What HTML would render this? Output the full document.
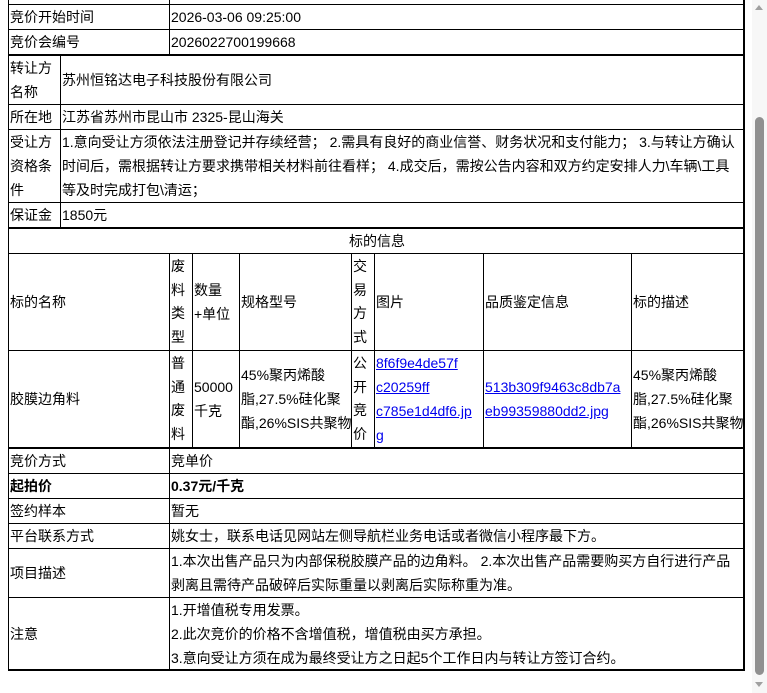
<!DOCTYPE html>
<html><head><meta charset="utf-8"><style>
*{margin:0;padding:0;box-sizing:border-box}
html,body{width:767px;height:693px;overflow:hidden;background:#fff}
body{position:relative;font:14px/24px "Liberation Sans","Noto Sans CJK SC",sans-serif;color:#000}
.c{position:absolute;border:1px solid #000;display:flex;align-items:center;padding-left:1px;overflow:hidden}
.c div{width:100%}
.h{position:absolute;background:#000}
a{color:#00e;text-decoration:underline}
.sb{position:absolute;left:752px;top:0;width:15px;height:693px;background:#f7f7f7}
.th{position:absolute;left:755px;top:117px;width:9px;height:558px;background:#909090;border-radius:5px}
</style></head><body>
<div class="c" style="left:8px;top:-21px;width:162px;height:26px"></div>
<div class="c" style="left:169px;top:-21px;width:576px;height:26px"></div>
<div class="c" style="left:8px;top:4px;width:162px;height:26px">竞价开始时间</div>
<div class="c" style="left:169px;top:4px;width:576px;height:26px">2026-03-06 09:25:00</div>
<div class="c" style="left:8px;top:29px;width:162px;height:26px">竞价会编号</div>
<div class="c" style="left:169px;top:29px;width:576px;height:26px">2026022700199668</div>
<div class="h" style="left:8px;top:54px;width:737px;height:2px"></div>
<div class="c" style="left:8px;top:55px;width:53px;height:50px"><div>转让方<br>名称</div></div>
<div class="c" style="left:60px;top:55px;width:685px;height:50px">苏州恒铭达电子科技股份有限公司</div>
<div class="c" style="left:8px;top:104px;width:53px;height:26px">所在地</div>
<div class="c" style="left:60px;top:104px;width:685px;height:26px">江苏省苏州市昆山市 2325-昆山海关</div>
<div class="c" style="left:8px;top:129px;width:53px;height:74px"><div>受让方<br>资格条<br>件</div></div>
<div class="c" style="left:60px;top:129px;width:685px;height:74px;padding-right:2px"><div>1.意向受让方须依法注册登记并存续经营； 2.需具有良好的商业信誉、财务状况和支付能力； 3.与转让方确认时间后，需根据转让方要求携带相关材料前往看样； 4.成交后，需按公告内容和双方约定安排人力\车辆\工具等及时完成打包\清运；</div></div>
<div class="c" style="left:8px;top:202px;width:53px;height:26px">保证金</div>
<div class="c" style="left:60px;top:202px;width:685px;height:26px">1850元</div>
<div class="h" style="left:8px;top:227px;width:737px;height:2px"></div>
<div class="c" style="left:8px;top:228px;width:737px;height:26px;justify-content:center">标的信息</div>
<div class="c" style="left:8px;top:253px;width:162px;height:98px">标的名称</div>
<div class="c" style="left:169px;top:253px;width:24px;height:98px;line-height:23.5px"><div>废<br>料<br>类<br>型</div></div>
<div class="c" style="left:192px;top:253px;width:48px;height:98px"><div>数量<br>+单位</div></div>
<div class="c" style="left:239px;top:253px;width:113px;height:98px">规格型号</div>
<div class="c" style="left:351px;top:253px;width:24px;height:98px;line-height:23.5px"><div>交<br>易<br>方<br>式</div></div>
<div class="c" style="left:374px;top:253px;width:110px;height:98px">图片</div>
<div class="c" style="left:483px;top:253px;width:149px;height:98px">品质鉴定信息</div>
<div class="c" style="left:631px;top:253px;width:114px;height:98px">标的描述</div>
<div class="c" style="left:8px;top:350px;width:162px;height:98px">胶膜边角料</div>
<div class="c" style="left:169px;top:350px;width:24px;height:98px;line-height:23.5px"><div>普<br>通<br>废<br>料</div></div>
<div class="c" style="left:192px;top:350px;width:48px;height:98px"><div>50000<br>千克</div></div>
<div class="c" style="left:239px;top:350px;width:113px;height:98px;white-space:nowrap"><div>45%聚丙烯酸<br>脂,27.5%硅化聚<br>酯,26%SIS共聚物</div></div>
<div class="c" style="left:351px;top:350px;width:24px;height:98px;line-height:23.5px"><div>公<br>开<br>竞<br>价</div></div>
<div class="c" style="left:374px;top:350px;width:110px;height:98px;white-space:nowrap"><div><a>8f6f9e4de57f<br>c20259ff<br>c785e1d4df6.jp<br>g</a></div></div>
<div class="c" style="left:483px;top:350px;width:149px;height:98px;white-space:nowrap"><div><a>513b309f9463c8db7a<br>eb99359880dd2.jpg</a></div></div>
<div class="c" style="left:631px;top:350px;width:114px;height:98px;white-space:nowrap"><div>45%聚丙烯酸<br>脂,27.5%硅化聚<br>酯,26%SIS共聚物</div></div>
<div class="h" style="left:8px;top:447px;width:737px;height:2px"></div>
<div class="c" style="left:8px;top:448px;width:162px;height:26px">竞价方式</div>
<div class="c" style="left:169px;top:448px;width:576px;height:26px">竞单价</div>
<div class="c" style="left:8px;top:473px;width:162px;height:26px;font-weight:bold">起拍价</div>
<div class="c" style="left:169px;top:473px;width:576px;height:26px;font-weight:bold">0.37元/千克</div>
<div class="c" style="left:8px;top:498px;width:162px;height:26px">签约样本</div>
<div class="c" style="left:169px;top:498px;width:576px;height:26px">暂无</div>
<div class="c" style="left:8px;top:523px;width:162px;height:26px">平台联系方式</div>
<div class="c" style="left:169px;top:523px;width:576px;height:26px">姚女士，联系电话见网站左侧导航栏业务电话或者微信小程序最下方。</div>
<div class="c" style="left:8px;top:548px;width:162px;height:50px">项目描述</div>
<div class="c" style="left:169px;top:548px;width:576px;height:50px;white-space:nowrap"><div>1.本次出售产品只为内部保税胶膜产品的边角料。 2.本次出售产品需要购买方自行进行产品<br>剥离且需待产品破碎后实际重量以剥离后实际称重为准。</div></div>
<div class="c" style="left:8px;top:597px;width:162px;height:74px">注意</div>
<div class="c" style="left:169px;top:597px;width:576px;height:74px"><div>1.开增值税专用发票。<br>2.此次竞价的价格不含增值税，增值税由买方承担。<br>3.意向受让方须在成为最终受让方之日起5个工作日内与转让方签订合约。</div></div>
<div class="h" style="left:8px;top:669px;width:737px;height:2px"></div>
<div class="h" style="left:743px;top:0;width:2px;height:671px"></div>
<div class="sb"></div>
<div class="th"></div>
<div style="position:absolute;left:755px;top:5px;width:0;height:0;border-left:4.5px solid transparent;border-right:4.5px solid transparent;border-bottom:5px solid #a0a0a0"></div>
<div style="position:absolute;left:755px;top:682px;width:0;height:0;border-left:4.5px solid transparent;border-right:4.5px solid transparent;border-top:5px solid #a0a0a0"></div>
</body></html>
